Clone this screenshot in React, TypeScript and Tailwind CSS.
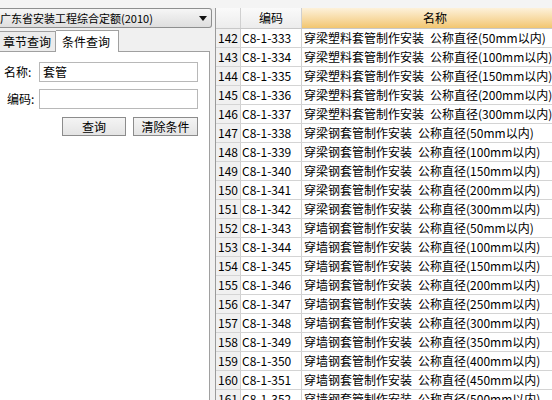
import React from 'react';

type Row = { no: number; code: string; name: string; size: number };

const rows: Row[] = [
  { no: 142, code: 'C8-1-333', name: '穿梁塑料套管制作安装', size: 50 },
  { no: 143, code: 'C8-1-334', name: '穿梁塑料套管制作安装', size: 100 },
  { no: 144, code: 'C8-1-335', name: '穿梁塑料套管制作安装', size: 150 },
  { no: 145, code: 'C8-1-336', name: '穿梁塑料套管制作安装', size: 200 },
  { no: 146, code: 'C8-1-337', name: '穿梁塑料套管制作安装', size: 300 },
  { no: 147, code: 'C8-1-338', name: '穿梁钢套管制作安装', size: 50 },
  { no: 148, code: 'C8-1-339', name: '穿梁钢套管制作安装', size: 100 },
  { no: 149, code: 'C8-1-340', name: '穿梁钢套管制作安装', size: 150 },
  { no: 150, code: 'C8-1-341', name: '穿梁钢套管制作安装', size: 200 },
  { no: 151, code: 'C8-1-342', name: '穿梁钢套管制作安装', size: 300 },
  { no: 152, code: 'C8-1-343', name: '穿墙钢套管制作安装', size: 50 },
  { no: 153, code: 'C8-1-344', name: '穿墙钢套管制作安装', size: 100 },
  { no: 154, code: 'C8-1-345', name: '穿墙钢套管制作安装', size: 150 },
  { no: 155, code: 'C8-1-346', name: '穿墙钢套管制作安装', size: 200 },
  { no: 156, code: 'C8-1-347', name: '穿墙钢套管制作安装', size: 250 },
  { no: 157, code: 'C8-1-348', name: '穿墙钢套管制作安装', size: 300 },
  { no: 158, code: 'C8-1-349', name: '穿墙钢套管制作安装', size: 350 },
  { no: 159, code: 'C8-1-350', name: '穿墙钢套管制作安装', size: 400 },
  { no: 160, code: 'C8-1-351', name: '穿墙钢套管制作安装', size: 450 },
  { no: 161, code: 'C8-1-352', name: '穿墙钢套管制作安装', size: 500 },
];

function QueryPanel() {
  return (
    <div className="w-[213px] shrink-0 flex flex-col">
      <div className="h-[20px] shrink-0 mr-[1px] flex items-center justify-between border border-l-0 border-[#8e8f8f] rounded-r-[3px] bg-gradient-to-b from-[#f6f6f6] to-[#dedede] pr-[4px]">
        <span className="text-[11px] leading-none text-black whitespace-nowrap">广东省安装工程综合定额(2010)</span>
        <svg width="8" height="5" viewBox="0 0 8 5"><path d="M0 0h8L4 5z" fill="#111" /></svg>
      </div>
      <div className="h-[22px] shrink-0 mt-[1px] flex items-end">
        <div className="h-[20px] w-[56px] border border-b-0 border-l-0 border-[#a0a0a0] bg-[#ececec] flex items-center pl-[3px] text-[12px] leading-none">章节查询</div>
        <div className="h-[22px] w-[63px] border border-b-0 border-l-0 border-[#a0a0a0] bg-white flex items-center pl-[6px] text-[12px] leading-none relative top-[1px] z-10">条件查询</div>
      </div>
      <div className="flex-1 w-[210px] bg-white border-t border-r border-[#a0a0a0] pt-[10px]">
        <div className="flex items-center h-[20px]">
          <span className="w-[39px] pl-[4px] text-[12px] leading-none">名称:</span>
          <div className="w-[159px] h-[20px] border border-[#b8b8b8] flex items-center pl-[3px] text-[12px] leading-none">套管</div>
        </div>
        <div className="flex items-center h-[20px] mt-[7px]">
          <span className="w-[39px] pl-[7px] text-[12px] leading-none">编码:</span>
          <div className="w-[159px] h-[20px] border border-[#b8b8b8]"></div>
        </div>
        <div className="flex mt-[8px] pl-[62px] gap-[7px]">
          <div className="w-[64px] h-[19px] border border-[#8c8c8c] bg-gradient-to-b from-[#f4f4f4] to-[#e4e4e4] flex items-center justify-center text-[12px] leading-none">查询</div>
          <div className="w-[65px] h-[19px] border border-[#8c8c8c] bg-gradient-to-b from-[#f4f4f4] to-[#e4e4e4] flex items-center justify-center text-[12px] leading-none">清除条件</div>
        </div>
      </div>
    </div>
  );
}

function Grid() {
  return (
    <div className="flex-1 ml-[2px] border-l border-[#9a9a9a] bg-white flex flex-col overflow-hidden">
      <div className="h-[21px] shrink-0 flex border-b border-[#c8c8c8] text-[12px] leading-none">
        <div className="w-[25px] shrink-0 border-r border-[#d0d0d0] bg-gradient-to-b from-[#fafafa] to-[#ececec]"></div>
        <div className="w-[61px] shrink-0 border-r border-[#d0d0d0] bg-gradient-to-b from-[#fafafa] to-[#ececec] flex items-center justify-center">编码</div>
        <div className="flex-1 bg-gradient-to-b from-[#fdf1da] to-[#f2c66f] flex items-center justify-center pl-[16px]">名称</div>
      </div>
      {rows.map((r) => (
        <div key={r.no} className="h-[19px] shrink-0 flex border-b border-[#d4d4d4] text-[12px] leading-none">
          <div className="w-[25px] shrink-0 border-r border-[#d0d0d0] bg-[#f0f0f0] flex items-center justify-end pr-[2px]">{r.no}</div>
          <div className="w-[61px] shrink-0 border-r border-[#d0d0d0] flex items-center pl-[1px]">{r.code}</div>
          <div className="flex-1 flex items-center pl-[2px] whitespace-pre">{r.name}{'\u2002'}公称直径({r.size}mm以内)</div>
        </div>
      ))}
    </div>
  );
}

export default function App() {
  return (
    <div
      className="w-[552px] h-[400px] overflow-hidden bg-[#f0f0f0] flex flex-col text-black"
      style={{ fontFamily: '"Noto Sans CJK SC", "Noto Sans", sans-serif' }}
    >
      <div className="h-[8px] shrink-0 bg-[#f4f4f4]"></div>
      <div className="flex-1 flex min-h-0">
        <QueryPanel />
        <Grid />
      </div>
    </div>
  );
}
